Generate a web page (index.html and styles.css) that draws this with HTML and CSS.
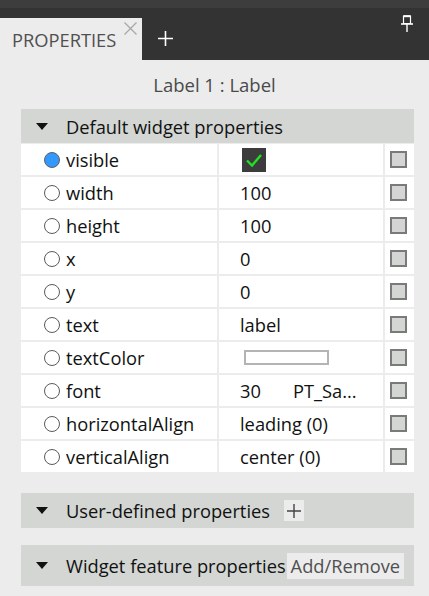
FILE: index.html
```html
<!DOCTYPE html>
<html>
<head>
<meta charset="utf-8">
<link rel="stylesheet" href="styles.css">
</head>
<body>
<div class="top-strip"></div>
<div class="tabbar">
  <div class="tab">
    <span class="tab-label">PROPERTIES</span>
    <svg class="tab-close" width="13" height="13" viewBox="0 0 13 13"><path d="M0.5 0.5 L12.5 12.5 M12.5 0.5 L0.5 12.5" stroke="#a8a8a8" stroke-width="1.3" fill="none"/></svg>
  </div>
  <svg class="tab-add" width="15" height="15" viewBox="0 0 15 15"><path d="M7.5 0 V15 M0 7.5 H15" stroke="#ffffff" stroke-width="1.6" fill="none"/></svg>
  <svg class="pin" width="12" height="17" viewBox="0 0 12 17"><path d="M2.5 1 H9.5 V8.5 H2.5 Z" stroke="#ffffff" stroke-width="1.2" fill="none"/><path d="M2.5 1.2 H9.5" stroke="#fff" stroke-width="2"/><path d="M0 9 H12" stroke="#ffffff" stroke-width="1.6"/><path d="M6 9 V17" stroke="#ffffff" stroke-width="1.4"/></svg>
</div>
<div class="title">Label 1 : Label</div>
<div class="panel">
  <div class="section-head">
    <span class="tri"></span><span>Default widget properties</span>
  </div>
  <div class="grid">
    <div class="c-name"><span class="radio on"></span>visible</div>
    <div class="c-val"><span class="check"><svg width="24" height="24" viewBox="0 0 24 24"><path d="M5 12.5 L10 17.5 L19 7" stroke="#22e022" stroke-width="2.4" fill="none"/></svg></span></div>
    <div class="c-box"><span class="box"></span></div>

    <div class="c-name"><span class="radio"></span>width</div>
    <div class="c-val">100</div>
    <div class="c-box"><span class="box"></span></div>

    <div class="c-name"><span class="radio"></span>height</div>
    <div class="c-val">100</div>
    <div class="c-box"><span class="box"></span></div>

    <div class="c-name"><span class="radio"></span>x</div>
    <div class="c-val">0</div>
    <div class="c-box"><span class="box"></span></div>

    <div class="c-name"><span class="radio"></span>y</div>
    <div class="c-val">0</div>
    <div class="c-box"><span class="box"></span></div>

    <div class="c-name"><span class="radio"></span>text</div>
    <div class="c-val">label</div>
    <div class="c-box"><span class="box"></span></div>

    <div class="c-name"><span class="radio"></span>textColor</div>
    <div class="c-val"><span class="swatch"></span></div>
    <div class="c-box"><span class="box"></span></div>

    <div class="c-name"><span class="radio"></span>font</div>
    <div class="c-val"><span class="fsize">30</span><span>PT_Sa...</span></div>
    <div class="c-box"><span class="box"></span></div>

    <div class="c-name"><span class="radio"></span>horizontalAlign</div>
    <div class="c-val">leading (0)</div>
    <div class="c-box"><span class="box"></span></div>

    <div class="c-name"><span class="radio"></span>verticalAlign</div>
    <div class="c-val">center (0)</div>
    <div class="c-box"><span class="box"></span></div>
  </div>

  <div class="section-head user">
    <span class="tri"></span><span>User-defined properties</span>
    <span class="plus-btn"><svg width="14" height="14" viewBox="0 0 14 14"><path d="M7 0 V14 M0 7 H14" stroke="#444" stroke-width="1.4" fill="none"/></svg></span>
  </div>

  <div class="section-head feature">
    <span class="tri"></span><span>Widget feature properties</span>
    <span class="addremove">Add/Remove</span>
  </div>
</div>
</body>
</html>
```
FILE: styles.css
```css
* { box-sizing: border-box; }
html, body { margin: 0; padding: 0; }
body {
  width: 429px;
  height: 596px;
  overflow: hidden;
  background: #ececec;
  font-family: "Open Sans", "Noto Sans", sans-serif;
  font-size: 18.3px;
  color: #111;
}
.top-strip { height: 8px; background: #3d3d3d; }
.tabbar {
  height: 52px;
  background: #333333;
  display: flex;
  align-items: flex-start;
  position: relative;
}
.tab {
  margin-top: 10px;
  width: 142px;
  height: 42px;
  background: #ececec;
  display: flex;
  align-items: flex-start;
}
.tab-label {
  margin-left: 12px;
  margin-top: 9px;
  font-size: 18.3px;
  color: #505050;
}
.tab-close { margin-left: 8px; margin-top: 4px; }
.tab-add { margin-left: 16px; margin-top: 23px; }
.pin { position: absolute; right: 16px; top: 7px; }

.title {
  height: 49px;
  display: flex;
  align-items: center;
  justify-content: center;
  color: #4a4a4a;
  font-size: 18.5px;
  padding-left: 0;
}
.panel { margin-left: 21px; width: 393px; }
.section-head {
  height: 34px;
  background: #d3d6d3;
  display: flex;
  align-items: center;
  padding-left: 15px;
  color: #111;
}
.tri {
  width: 0; height: 0;
  border-left: 6px solid transparent;
  border-right: 6px solid transparent;
  border-top: 7px solid #111;
  margin-right: 18px;
}
.grid {
  display: grid;
  grid-template-columns: 196px 164px 29px;
  grid-auto-rows: 31px;
  column-gap: 2px;
  row-gap: 2px;
  padding-top: 1px;
  background: #ececec;
}
.grid > div {
  background: #ffffff;
  display: flex;
  align-items: center;
  white-space: nowrap;
}
.c-name { padding-left: 23px; }
.c-val { padding-left: 21px; }
.c-box { padding-left: 5px; }
.radio {
  width: 16px; height: 16px;
  border-radius: 50%;
  border: 1.5px solid #5a5a5a;
  background: #fff;
  margin-right: 6px;
  flex: none;
}
.radio.on { background: #3399ff; border-color: #606060; }
.check {
  width: 24px; height: 24px;
  background: #3c3c3c;
  margin-left: 2px;
  display: flex;
}
.box {
  width: 17px; height: 17px;
  border: 2px solid #7a7a7a;
  background: #d3d6d3;
}
.swatch {
  width: 85px; height: 15px;
  border: 2px solid #b2b5b2;
  background: #fff;
  margin-left: 4px;
}
.fsize { width: 53px; }
.section-head.user { margin-top: 21px; height: 35px; }
.plus-btn {
  margin-left: 14px;
  width: 20px; height: 21px;
  background: #ececec;
  display: flex;
  align-items: center;
  justify-content: center;
}
.section-head.feature { margin-top: 17px; height: 41px; }
.addremove {
  margin-left: 1px;
  height: 26px;
  padding: 0 4px;
  background: #ececec;
  color: #505050;
  display: flex;
  align-items: center;
}
```
